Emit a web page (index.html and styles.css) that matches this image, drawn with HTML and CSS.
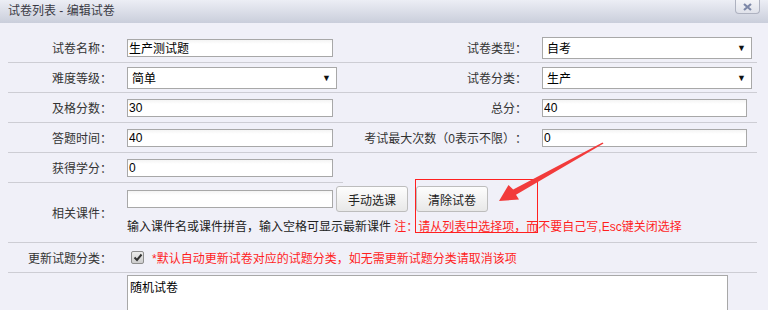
FILE: index.html
```html
<!DOCTYPE html>
<html lang="zh">
<head>
    <meta charset="UTF-8">
    <title>试卷列表 - 编辑试卷</title>
    <link rel="stylesheet" href="styles.css">
</head>
<body>
<div class="page">
    <div class="titlebar">
        <span class="title">试卷列表 - 编辑试卷</span>
        <span class="close">
            <svg width="9" height="8" viewBox="0 0 9 8"><path d="M1 1 L8 7 M8 1 L1 7" stroke="#7d88a8" stroke-width="2.2"/></svg>
        </span>
    </div>

    <div class="form">
        <!-- 第一行 -->
        <div class="cell label">试卷名称：</div>
        <div class="cell value"><input class="text" type="text" value="生产测试题"></div>
        <div class="cell label">试卷类型：</div>
        <div class="cell value"><div class="select"><span>自考</span><span class="arrow">▼</span></div></div>

        <div class="cell label">难度等级：</div>
        <div class="cell value"><div class="select"><span>简单</span><span class="arrow">▼</span></div></div>
        <div class="cell label">试卷分类：</div>
        <div class="cell value"><div class="select"><span>生产</span><span class="arrow">▼</span></div></div>

        <div class="cell label">及格分数：</div>
        <div class="cell value"><input class="text" type="text" value="30"></div>
        <div class="cell label">总分：</div>
        <div class="cell value"><input class="text short" type="text" value="40"></div>

        <div class="cell label">答题时间：</div>
        <div class="cell value"><input class="text" type="text" value="40"></div>
        <div class="cell label">考试最大次数（0表示不限）：</div>
        <div class="cell value"><input class="text short" type="text" value="0"></div>

        <div class="cell label">获得学分：</div>
        <div class="cell value"><input class="text" type="text" value="0"></div>
        <div class="cell blank"></div>
        <div class="cell blank"></div>

        <!-- 相关课件 -->
        <div class="cell label tall">相关课件：</div>
        <div class="cell value tall wide course">
            <div class="course-line">
                <input class="text" type="text" value="">
                <button class="btn">手动选课</button>
                <button class="btn">清除试卷</button>
            </div>
            <div class="hint">输入课件名或课件拼音，输入空格可显示最新课件 <span class="red">注：请从列表中选择项，而不要自己写,Esc键关闭选择</span></div>
        </div>

        <div class="cell label">更新试题分类：</div>
        <div class="cell value wide">
            <span class="check">
                <svg width="10" height="9" viewBox="0 0 10 9"><path d="M1.5 4.5 L4 7 L8.5 1.5" fill="none" stroke="#333" stroke-width="2"/></svg>
            </span>
            <span class="red">*默认自动更新试卷对应的试题分类，如无需更新试题分类请取消该项</span>
        </div>

        <div class="cell label last"></div>
        <div class="cell value wide last">
            <textarea class="area">随机试卷</textarea>
        </div>
    </div>

    <!-- 标注 -->
    <div class="mark-box"></div>
    <svg class="mark-arrow" width="768" height="310" viewBox="0 0 768 310">
        <polygon points="603.5,143.6 602.5,142.4 513.2,189.6 508.5,185.0 499,201 519,199.5 516,194.8" fill="#f23b3b"/>
    </svg>
</div>
</body>
</html>
```

FILE: styles.css
```css
body {
    margin: 0;
    background-color: #f0f0f8;
    font-family: "Liberation Sans", "Noto Sans CJK SC", sans-serif;
    font-size: 12px;
    color: #222;
    text-spacing-trim: space-all;
}
.page {
    position: relative;
    height: 310px;
    overflow: hidden;
}
.titlebar {
    height: 23px;
    background: linear-gradient(#eceef5, #cacedb);
    display: flex;
    justify-content: space-between;
    align-items: flex-start;
    padding-left: 8px;
}
.title {
    line-height: 22px;
    color: #3a3a44;
}
.close {
    width: 23px;
    height: 13px;
    margin-right: 8px;
    border: 1px solid #aeb2c0;
    border-top: none;
    border-radius: 0 0 4px 4px;
    background: linear-gradient(#f3f4f8, #e0e2ea);
    display: flex;
    align-items: center;
    justify-content: center;
}
.form {
    display: grid;
    grid-template-columns: 112px 223px 192px 222px;
    padding: 10px 0 0 8px;
}
.cell {
    height: 30px;
    box-sizing: border-box;
    border-bottom: 1px solid #cdcdd4;
    display: flex;
    align-items: center;
}
.blank {
    border-bottom: none;
}
.label {
    justify-content: flex-end;
    padding-right: 8px;
    color: #333;
    white-space: nowrap;
}
.value {
    padding-left: 7px;
}
.wide {
    grid-column: 2 / 5;
}
.tall {
    height: 60px;
}
.last {
    border-bottom: none;
    height: 40px;
    align-items: flex-start;
}
.text {
    width: 206px;
    height: 18px;
    box-sizing: border-box;
    border: 1px solid #a8a8a8;
    background: linear-gradient(#f4f4f4, #fff 4px);
    font: inherit;
    color: #000;
    padding: 0 1px;
    margin: 0;
    outline: none;
}
.short {
    width: 205px;
}
.select {
    width: 210px;
    height: 22px;
    box-sizing: border-box;
    border: 1px solid #a8a8a8;
    background-color: #fff;
    display: flex;
    justify-content: space-between;
    align-items: center;
    padding: 0 5px 0 4px;
    color: #000;
}
.arrow {
    font-size: 9px;
    color: #111;
}
.course {
    flex-direction: column;
    align-items: flex-start;
    justify-content: flex-start;
    padding-top: 3px;
}
.course-line {
    display: flex;
    align-items: center;
}
.btn {
    height: 26px;
    width: 72px;
    margin-left: 3px;
    border: 1px solid #bdbdbd;
    border-radius: 3px;
    background: linear-gradient(#fdfdfd, #e8e8e8);
    font: inherit;
    color: #222;
    padding: 0;
}
.btn + .btn {
    margin-left: 8px;
}
.hint {
    margin-top: 8px;
    line-height: 14px;
    white-space: nowrap;
    color: #222;
}
.red {
    color: #ff1f1f;
}
.check {
    width: 11px;
    height: 11px;
    margin: 0 8px 0 4px;
    border: 1px solid #8e8e8e;
    border-radius: 2px;
    background: linear-gradient(#ececec, #cdcdcd);
    display: flex;
    align-items: center;
    justify-content: center;
}
.area {
    width: 601px;
    height: 60px;
    box-sizing: border-box;
    margin-top: 2px;
    border: 1px solid #a8a8a8;
    background-color: #fff;
    font: inherit;
    color: #000;
    padding: 2px 2px;
    resize: none;
}
.mark-box {
    position: absolute;
    left: 415px;
    top: 179px;
    width: 121px;
    height: 52px;
    border: 1px solid #ff2020;
}
.mark-arrow {
    position: absolute;
    left: 0;
    top: 0;
    pointer-events: none;
}
```
